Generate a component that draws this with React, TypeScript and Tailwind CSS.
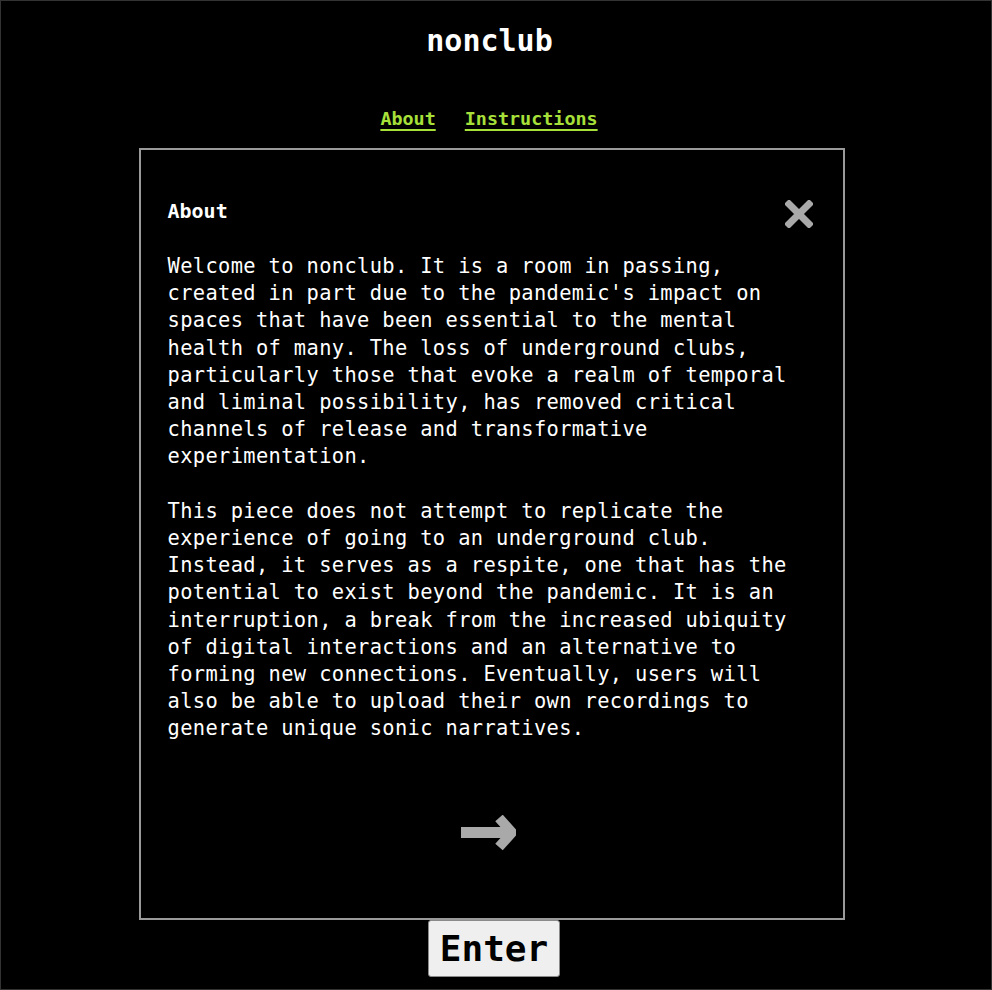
const mono = "font-['DejaVu_Sans_Mono','Liberation_Mono',monospace]"

function CloseIcon() {
    return <svg width="28" height="28" viewBox="0 0 28 28" className="shrink-0 mt-[5px] mr-[1px]">
        <path d="M4 4 L24 24 M24 4 L4 24" stroke="#a9a9a9" strokeWidth="7" strokeLinecap="square" />
    </svg>
}

function ArrowIcon() {
    return <svg width="56" height="36" viewBox="0 0 56 36">
        <path d="M1 17.5 H48" stroke="#a9a9a9" strokeWidth="11" />
        <path d="M39 3 L52 17.5 L39 32" stroke="#a9a9a9" strokeWidth="10" fill="none" strokeLinejoin="miter" />
    </svg>
}

export default function App() {
    return <div className={"h-[990px] w-full bg-black border border-[#333] flex flex-col items-center " + mono}>
        <div className="h-[79px] flex items-center justify-center ml-[-13px]">
            <h1 className="text-white text-[30px] font-bold leading-none">nonclub</h1>
        </div>
        <nav className="mt-[20px] h-[38px] flex items-center justify-center gap-[29px] ml-[-14px]">
            <a href="#" className="text-[#a8e03a] text-[18.4px] font-bold underline decoration-2 underline-offset-[4px]">About</a>
            <a href="#" className="text-[#a8e03a] text-[18.4px] font-bold underline decoration-2 underline-offset-[4px]">Instructions</a>
        </nav>
        <div className="mt-[10px] w-[706px] h-[772px] border-2 border-[#9a9a9a] flex flex-col pl-[27px] pr-[29px] pt-[48px] ml-[-9px]">
            <div className="flex items-center justify-between h-[27px]">
                <h2 className="text-white text-[20px] font-bold leading-[27px]">About</h2>
                <CloseIcon />
            </div>
            <div className="mt-[28px] w-[636px] text-white text-[20.4px] leading-[27.2px] tracking-[0.36px]">
                <p>
                    Welcome to nonclub. It is a room in passing, created in part due to the pandemic's impact on spaces that have been essential to the mental health of many. The loss of underground clubs, particularly those that evoke a realm of temporal and liminal possibility, has removed critical channels of release and transformative experimentation.
                </p>
                <p className="mt-[27.2px]">
                    This piece does not attempt to replicate the experience of going to an underground club. Instead, it serves as a respite, one that has the potential to exist beyond the pandemic. It is an interruption, a break from the increased ubiquity of digital interactions and an alternative to forming new connections. Eventually, users will also be able to upload their own recordings to generate unique sonic narratives.
                </p>
            </div>
            <div className="mt-[72px] flex justify-center pr-[6px]">
                <ArrowIcon />
            </div>
        </div>
        <button className="w-[132px] h-[57px] bg-[#efefef] border border-[#8a8a8a] rounded-[3px] text-black text-[36px] font-bold leading-none flex items-center justify-center ml-[-4px]">
            Enter
        </button>
    </div>
}
